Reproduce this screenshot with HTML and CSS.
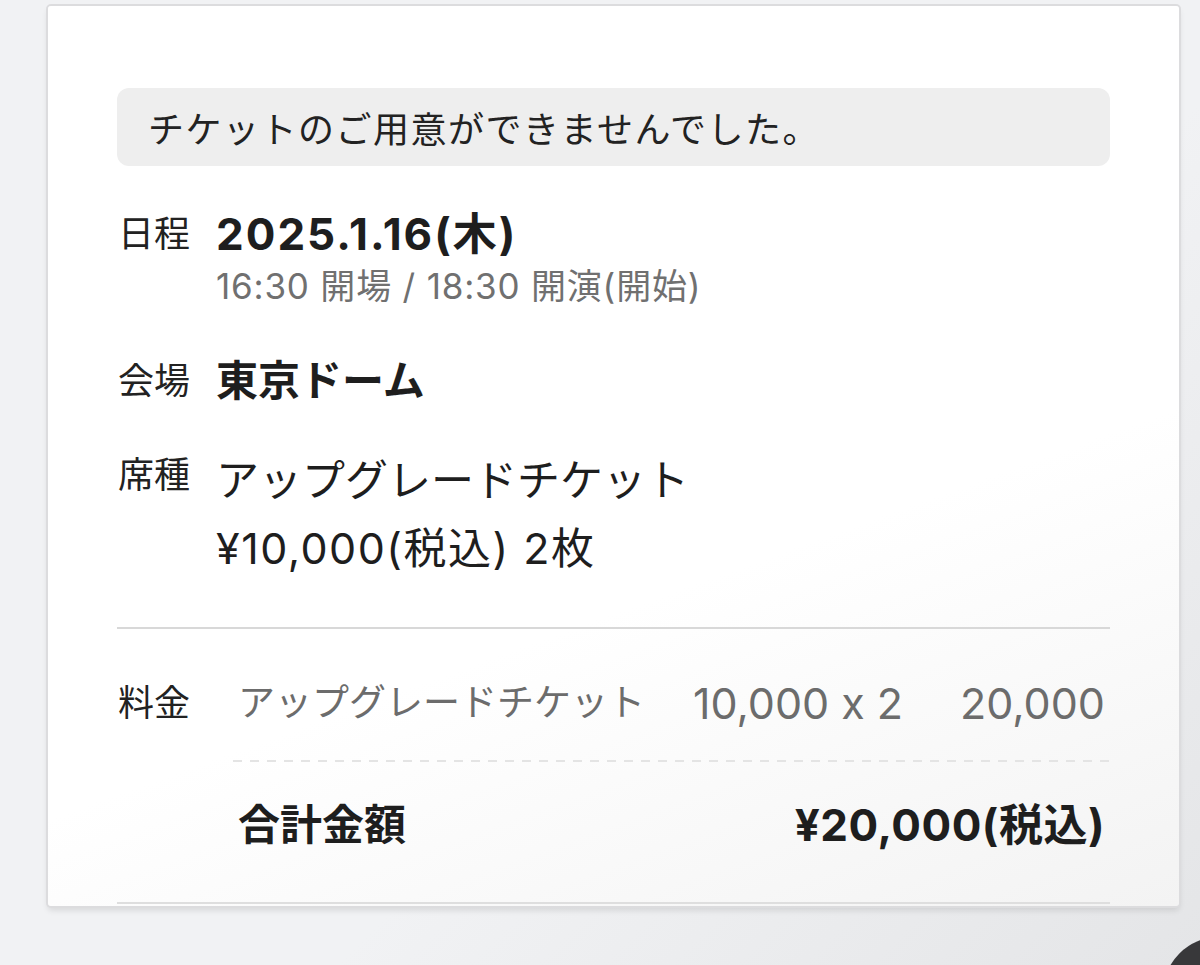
FILE: index.html
```html
<!DOCTYPE html>
<html lang="ja">
<head>
    <meta charset="UTF-8">
    <meta name="viewport" content="width=device-width, initial-scale=1.0">
    <title>チケット詳細</title>
    <link rel="stylesheet" href="styles.css">
</head>
<body>
    <div class="card">
        <div class="notice">チケットのご用意ができませんでした。</div>

        <div class="info-row row-date">
            <div class="label">日程</div>
            <div class="value">
                <div class="date">2025.1.16(木)</div>
                <div class="time">16:30 開場 / 18:30 開演(開始)</div>
            </div>
        </div>

        <div class="info-row row-venue">
            <div class="label">会場</div>
            <div class="value venue">東京ドーム</div>
        </div>

        <div class="info-row row-seat">
            <div class="label">席種</div>
            <div class="value seat">
                <div>アップグレードチケット</div>
                <div class="seat-price">¥10,000(税込) 2枚</div>
            </div>
        </div>

        <hr class="divider">

        <div class="price-row">
            <div class="label">料金</div>
            <div class="price-name">アップグレードチケット</div>
            <div class="price-qty">10,000 x 2</div>
            <div class="price-sum">20,000</div>
        </div>

        <div class="dashed"></div>

        <div class="total-row">
            <div class="total-label">合計金額</div>
            <div class="total-value">¥20,000(税込)</div>
        </div>

        <hr class="divider divider-bottom">
    </div>

    <!-- round button, only its top-left edge shows in the corner -->
    <svg class="fab" width="37" height="28" viewBox="0 0 37 28">
        <circle cx="56" cy="56" r="56" fill="#38383a"/>
    </svg>
</body>
</html>
```

FILE: styles.css
```css
body {
    margin: 0;
    padding: 0;
    width: 1200px;
    height: 965px;
    overflow: hidden;
    position: relative;
    background: linear-gradient(135deg, #f1f2f4 60%, #e4e5e7);
    font-family: Inter, "Noto Sans CJK JP", sans-serif;
    font-feature-settings: "calt" 0;
    color: #1e1e1e;
}
.card {
    margin: 6px 0 0 48px;
    width: 1131px;
    height: 900px;
    box-sizing: border-box;
    padding: 0 69px;
    background: linear-gradient(160deg, #ffffff 62%, #f3f3f3);
    border-radius: 3px;
    box-shadow: 0 0 0 2px #dcdcde, 0 4px 6px rgba(0, 0, 0, 0.12);
    overflow: hidden;
}
.notice {
    margin-top: 82px;
    height: 78px;
    padding-left: 31px;
    display: flex;
    align-items: center;
    background: #eeeeee;
    border-radius: 12px;
    font-size: 36px;
    letter-spacing: 1.5px;
    color: #222;
}
.info-row {
    display: flex;
    align-items: flex-start;
}
.label {
    width: 98px;
    flex-shrink: 0;
    padding-left: 1px;
    font-size: 36px;
    line-height: 52px;
    color: #222;
}
.row-date {
    margin-top: 42px;
}
.date {
    font-size: 44px;
    font-weight: 700;
    line-height: 52px;
    letter-spacing: 2px;
}
.time {
    font-size: 35px;
    line-height: 52px;
    letter-spacing: 0.8px;
    color: #707070;
}
.row-venue {
    margin-top: 43px;
}
.venue {
    font-size: 42px;
    font-weight: 700;
    line-height: 52px;
}
.row-seat {
    margin-top: 39px;
}
.row-seat .label {
    line-height: 58px;
}
.seat {
    font-size: 43px;
    line-height: 68px;
}
.seat-price {
    letter-spacing: 1.5px;
}
.divider {
    margin: 45px 0 0;
    border: none;
    height: 2px;
    background: #d8d8d8;
}
.price-row {
    margin-top: 44px;
    display: flex;
    align-items: center;
    line-height: 60px;
    padding-right: 5px;
    color: #6c6c6c;
}
.price-row .label {
    width: 120px;
    padding-left: 1px;
    line-height: 60px;
}
.price-name {
    flex: 1;
    font-size: 37px;
}
.price-qty,
.price-sum {
    font-size: 43px;
}
.price-sum {
    margin-left: 57px;
}
.dashed {
    margin: 27px 0 0 116px;
    height: 2px;
    background: repeating-linear-gradient(90deg, #e4e4e4 0 9px, transparent 9px 17px);
}
.total-row {
    margin-top: 33px;
    padding: 0 5px 0 121px;
    display: flex;
    justify-content: space-between;
    align-items: center;
    line-height: 60px;
    font-weight: 700;
}
.total-label {
    font-size: 42px;
}
.total-value {
    font-size: 44px;
    letter-spacing: 0.5px;
}
.divider-bottom {
    margin-top: 47px;
    background: #dedede;
}
.fab {
    position: absolute;
    right: 0;
    bottom: 0;
    display: block;
}
```
